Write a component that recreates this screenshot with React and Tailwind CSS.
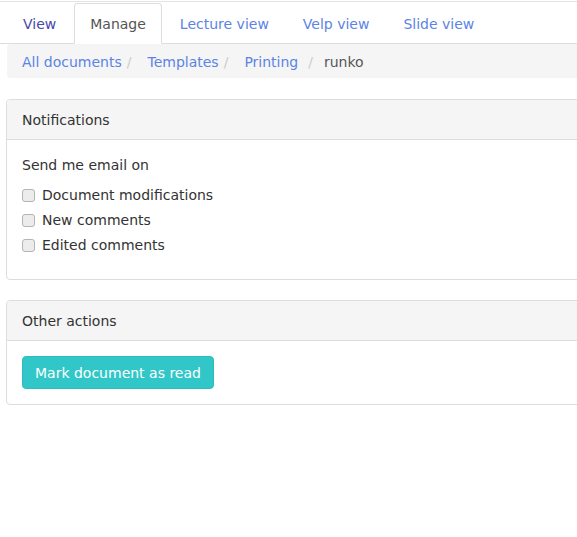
import React from "react";

const font = { fontFamily: '"DejaVu Sans", Verdana, sans-serif' };

function Tab({ children, active, visited }) {
  return (
    <li className="mr-[2px] -mb-px">
      <span
        className={
          "block px-[15px] pt-[10px] pb-[8px] leading-[21px] border rounded-t-[4px] " +
          (active
            ? "border-[#dddddd] border-b-white bg-white text-[#555555]"
            : visited
            ? "border-transparent text-[#4a48a8]"
            : "border-transparent text-[#5b84e4]")
        }
      >
        {children}
      </span>
    </li>
  );
}

function Check({ label }) {
  return (
    <div className="flex items-center h-[20px]">
      <span className="w-[13px] h-[13px] rounded-[3px] border border-[#b4b4b4] bg-[#ececec] mr-[7px] shrink-0" />
      <span>{label}</span>
    </div>
  );
}

function Sep({ cls }) {
  return <span className={"text-[#cccccc] " + cls}>/</span>;
}

export default function App() {
  return (
    <div className="w-full overflow-hidden bg-white min-h-[537px]" style={font}>
      <div className="w-[640px] text-[14px] text-[#333333]">
        <div className="h-px" />
        <div className="border-t border-[#e3e3e3]" />
        <div className="h-px" />
        <ul className="flex border-b border-[#dddddd] pl-[7px]">
          <Tab visited>View</Tab>
          <Tab active>Manage</Tab>
          <Tab>Lecture view</Tab>
          <Tab>Velp view</Tab>
          <Tab>Slide view</Tab>
        </ul>
        <div className="ml-[7px] mb-[21px] bg-[#f5f5f5] rounded-[4px] px-[15px] pt-[8px] pb-[6px] leading-[20px] flex items-center">
          <span className="text-[#5b84e4]">All documents</span>
          <Sep cls="ml-[5px] mr-[16px]" />
          <span className="text-[#5b84e4]">Templates</span>
          <Sep cls="ml-[5px] mr-[16px]" />
          <span className="text-[#5b84e4]">Printing</span>
          <Sep cls="ml-[10px] mr-[11px]" />
          <span className="text-[#555555]">runko</span>
        </div>

        <div className="ml-[6px] mb-[20px] border border-[#dddddd] rounded-[4px]">
          <div className="bg-[#f5f5f5] border-b border-[#dddddd] px-[15px] pt-[11px] pb-[9px] leading-[19px] rounded-t-[3px]">
            Notifications
          </div>
          <div className="p-[15px]">
            <p className="leading-[20px] mb-[10px]">Send me email on</p>
            <div className="flex flex-col gap-[5px] mb-[9px]">
              <Check label="Document modifications" />
              <Check label="New comments" />
              <Check label="Edited comments" />
            </div>
          </div>
        </div>

        <div className="ml-[6px] border border-[#dddddd] rounded-[4px]">
          <div className="bg-[#f5f5f5] border-b border-[#dddddd] px-[15px] pt-[11px] pb-[9px] leading-[19px] rounded-t-[3px]">
            Other actions
          </div>
          <div className="p-[15px]">
            <button className="bg-[#31c7c8] border border-[#2bbcbd] text-white rounded-[4px] px-[12px] pt-[7px] pb-[5px] leading-[19px]">
              Mark document as read
            </button>
          </div>
        </div>
      </div>
    </div>
  );
}
